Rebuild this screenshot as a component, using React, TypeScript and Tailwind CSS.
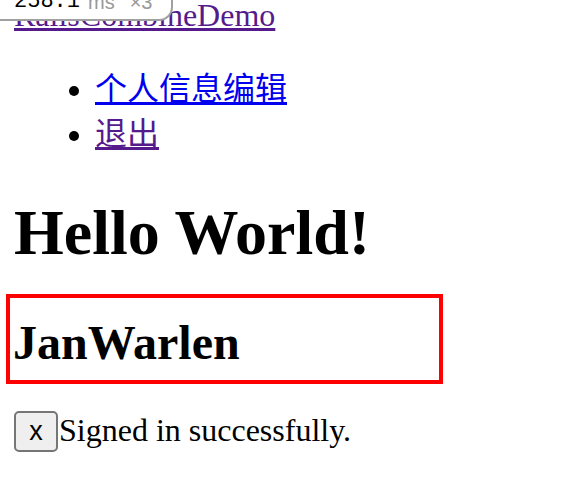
import React from "react";

const App = () => {
  return (
    <div className="relative min-h-screen overflow-hidden bg-white text-black font-['Liberation_Serif','Noto_Sans_CJK_SC',serif] text-[32px]">
      {/* profiler badge pinned to the corner */}
      <div className="absolute -left-[2px] -top-[21px] h-[42px] w-[175px] rounded-br-[14px] border-2 border-[#a0a0a0] bg-white flex items-end pb-[6px] pl-[14px]">
        <span className="font-['Liberation_Mono',monospace] text-[22px] leading-[22px] text-black">258.1</span>
        <span className="ml-[8px] font-['Liberation_Sans',sans-serif] text-[20px] leading-[22px] text-[#999]">ms</span>
        <span className="ml-[15px] font-['Liberation_Sans',sans-serif] text-[20px] leading-[22px] text-[#999]">×3</span>
      </div>

      <div className="pl-[6px] -mt-[3px]">
        <div className="pl-[8px] leading-[36px]">
          <a href="#" className="text-[#551A8B] underline">RailsCombineDemo</a>
        </div>

        <ul className="mt-[34px] list-disc pl-[89px]">
          <li className="leading-[45px]">
            <a href="#" className="text-[#0000EE] underline">个人信息编辑</a>
          </li>
          <li className="leading-[45px]">
            <a href="#" className="text-[#551A8B] underline">退出</a>
          </li>
        </ul>

        <h1 className="mt-[40px] pl-[8px] text-[64px] font-bold leading-[72px]">Hello World!</h1>

        <div className="mt-[25px] w-[437px] border-4 border-[#ff0000] pt-[18px] pb-[10px] pl-[3px]">
          <h2 className="text-[48px] font-bold leading-[54px]">JanWarlen</h2>
        </div>

        <div className="mt-[27px] ml-[8px] flex items-start">
          <button className="h-[41px] w-[44px] rounded-[5px] border-2 border-[#767676] bg-[#efefef] font-['Liberation_Sans',sans-serif] text-[27px] leading-none text-black">
            x
          </button>
          <span className="mt-[1px] ml-[1px] leading-[36px]">Signed in successfully.</span>
        </div>
      </div>
    </div>
  );
};

export default App;
